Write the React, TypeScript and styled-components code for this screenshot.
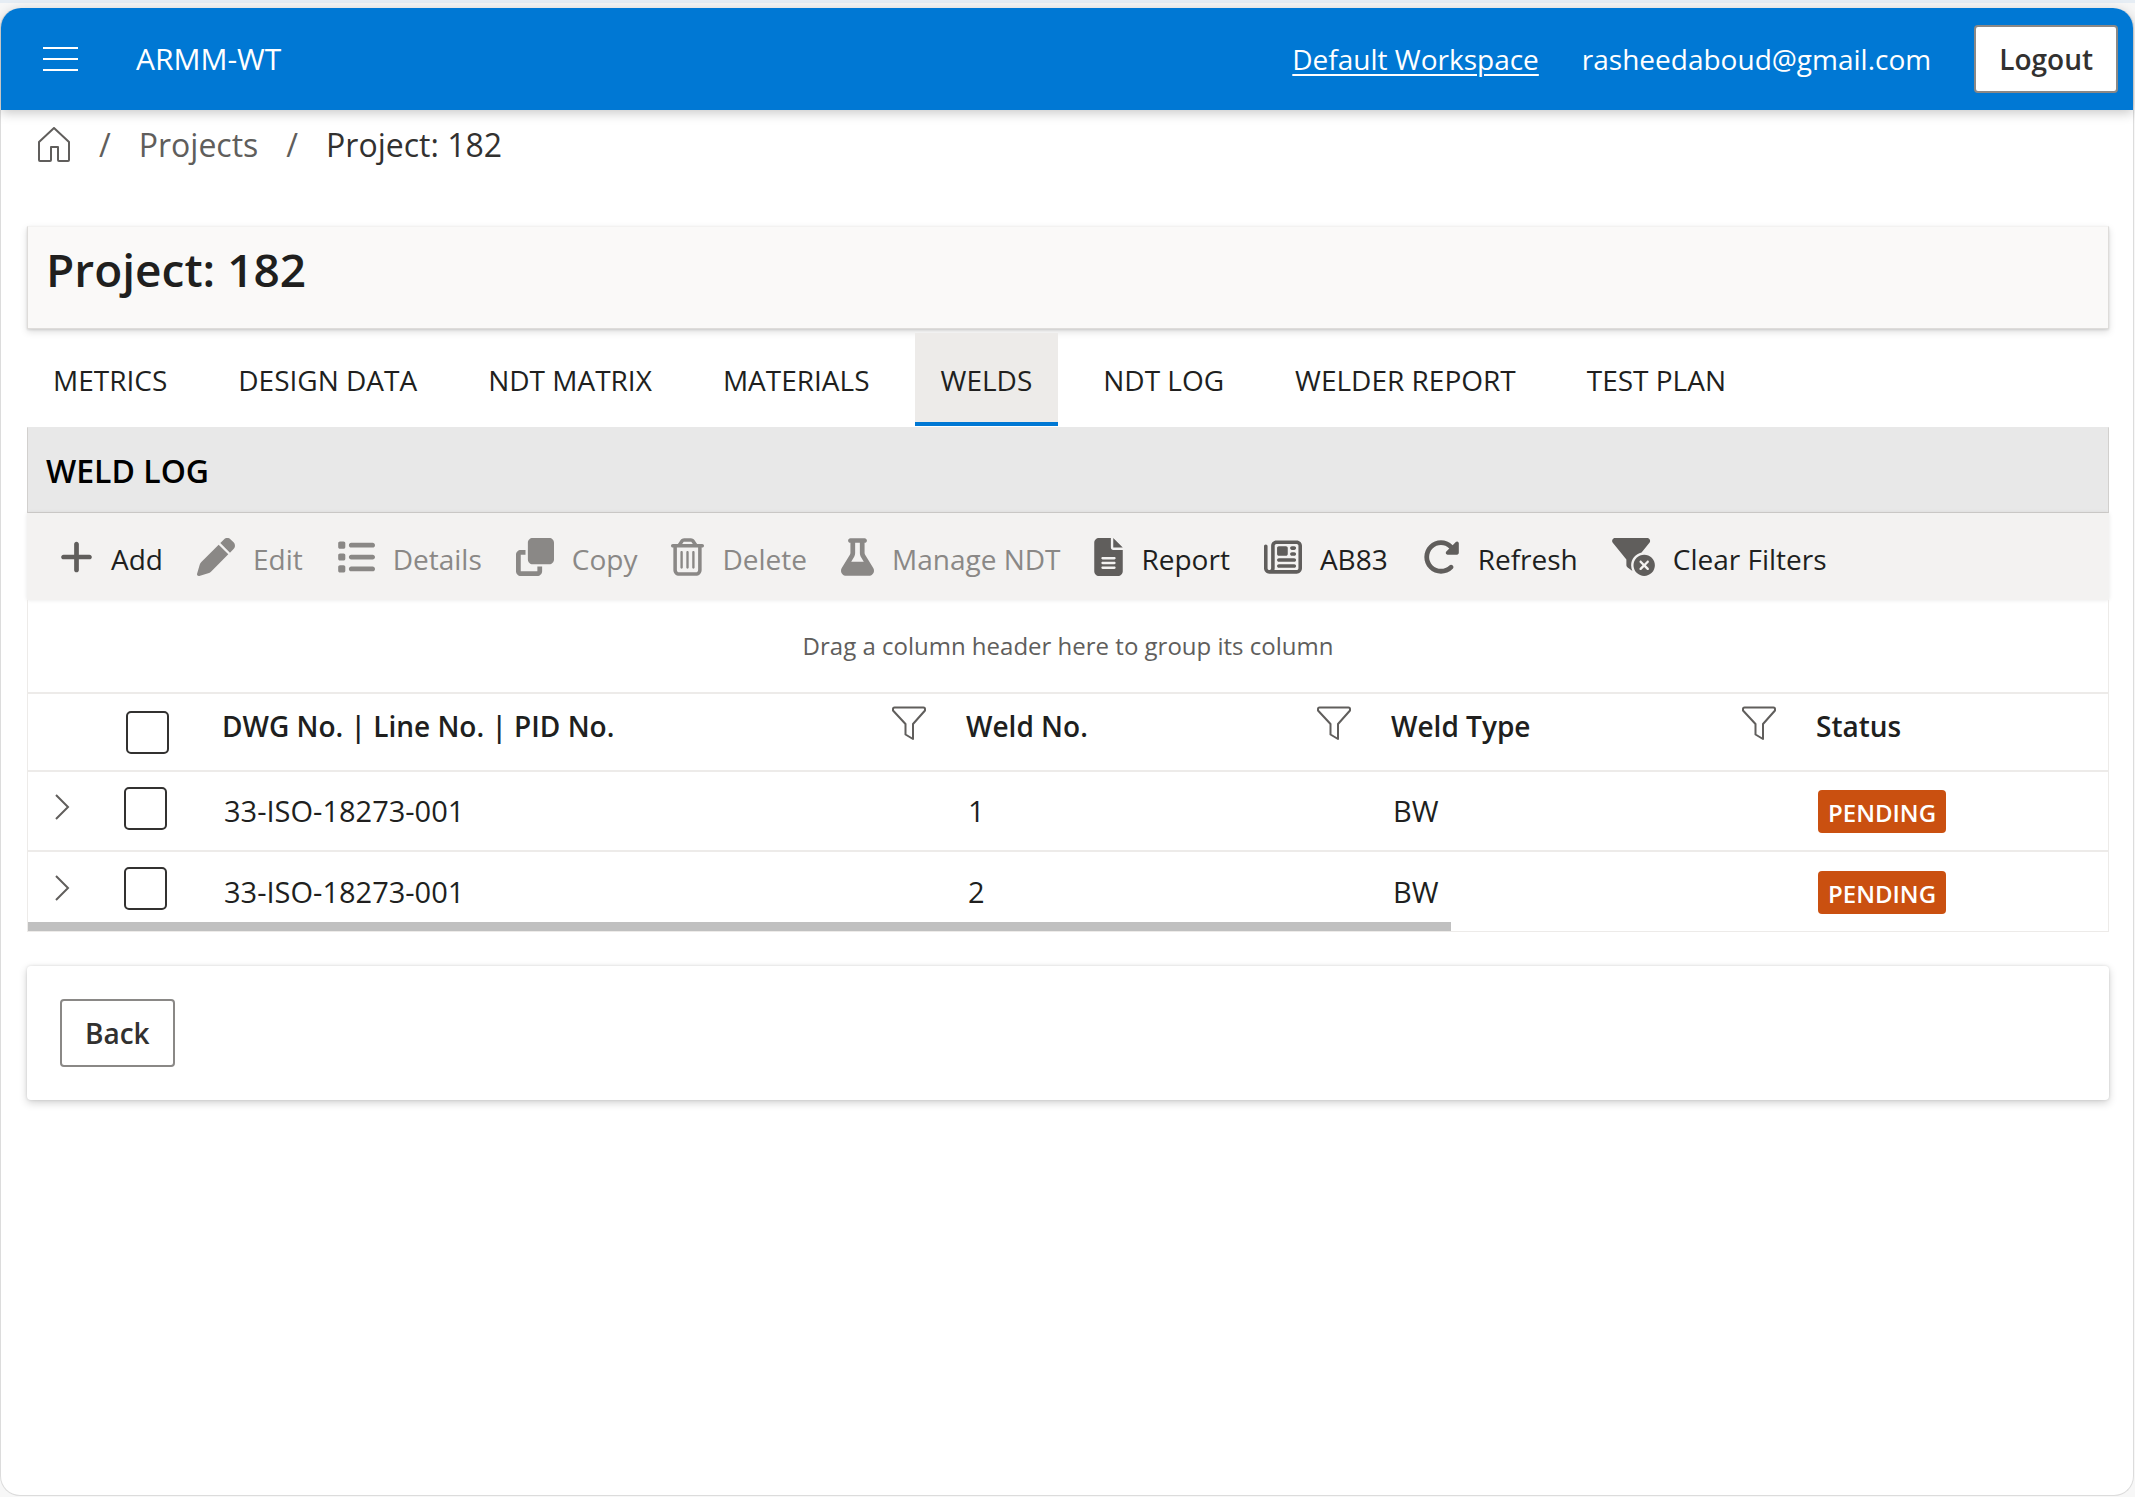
import React from "react";
import styled, { createGlobalStyle, css } from "styled-components";
import {
  FaClone,
  FaFileLines,
  FaFilterCircleXmark,
  FaFlask,
  FaList,
  FaPen,
  FaPlus,
  FaRegNewspaper,
  FaRegTrashCan,
  FaRotateRight,
} from "react-icons/fa6";

const color = {
  brand: "#0078d4",
  text: "#201f1e",
  textSoft: "#323130",
  muted: "#605e5c",
  disabled: "#8a8886",
  line: "#edebe9",
  panel: "#faf9f8",
  toolbar: "#f3f2f1",
  warning: "#ca5010",
};

const GlobalStyle = createGlobalStyle`
  * { box-sizing: border-box; }
  body {
    margin: 0;
    background: #f7f7f7;
    color: ${color.text};
    font-family: "Segoe UI", "Open Sans", "Noto Sans", sans-serif;
    font-size: 28px;
    line-height: 40px;
  }
  button, input { font: inherit; color: inherit; }
  h1, h2 { margin: 0; }
`;

const Window = styled.div`
  display: flex;
  flex-direction: column;
  min-height: 100vh;
  padding: 5px 1px 1px 0;
  border-top: 3px solid #e6edf4;
`;

const Page = styled.div`
  flex: 1;
  border: 1px solid #dcdcdc;
  border-top: 0;
  border-radius: 20px;
  background: #fff;
`;

const Header = styled.header`
  display: flex;
  align-items: center;
  height: 102px;
  padding: 0 15px 0 42px;
  border-radius: 20px 20px 0 0;
  background: ${color.brand};
  color: #fff;
  box-shadow: 0 3px 12px rgba(0, 0, 0, 0.22);
`;

const MenuButton = styled.button`
  display: flex;
  padding: 0;
  border: 0;
  background: none;
`;

const AppName = styled.span`
  margin-left: 58px;
  font-size: 30px;
`;

const UserArea = styled.div`
  display: flex;
  align-items: center;
  gap: 43px;
  margin-left: auto;
`;

const WorkspaceLink = styled.a`
  color: inherit;
  text-decoration-thickness: 2px;
  text-underline-offset: 4px;
`;

const OutlineButton = styled.button`
  height: 68px;
  padding: 0 23px;
  border: 2px solid ${color.disabled};
  border-radius: 4px;
  background: #fff;
  color: ${color.textSoft};
  font-weight: 600;
`;

const Breadcrumb = styled.nav`
  display: flex;
  align-items: center;
  gap: 28px;
  height: 70px;
  padding-left: 36px;
  color: ${color.muted};
  font-size: 32px;
`;

const CrumbLink = styled.a`
  display: flex;
  color: inherit;
  text-decoration: none;
`;

const CurrentCrumb = styled.span`
  color: ${color.textSoft};
`;

const Main = styled.main`
  padding: 46px 24px 24px 26px;
`;

const raised = css`
  box-shadow: 0 3px 7px rgba(0, 0, 0, 0.13), 0 1px 2px rgba(0, 0, 0, 0.11);
`;

const TitleBar = styled.div`
  height: 103px;
  padding: 10px 18px;
  border: 1px solid #dedcda;
  border-top-color: #f3f2f1;
  background: ${color.panel};
  ${raised}

  h1 {
    font-size: 46px;
    font-weight: 600;
    line-height: 64px;
  }
`;

const TabList = styled.div`
  display: flex;
  gap: 19px;
  padding-top: 4px;
`;

const Tab = styled.button<{ $active?: boolean }>`
  height: 93px;
  padding: 4px 26px 0;
  border: 0;
  border-bottom: 4px solid ${(p) => (p.$active ? color.brand : "transparent")};
  background: ${(p) => (p.$active ? color.line : "transparent")};
`;

const SectionBar = styled.div`
  height: 86px;
  margin-top: 1px;
  padding: 0 18px;
  border: 1px solid #d2d0ce;
  border-top-color: #e8e8e8;
  background: #e8e8e8;
  color: #000;

  h2 {
    font-size: 32px;
    font-weight: 600;
    line-height: 86px;
  }
`;

const Toolbar = styled.div`
  display: flex;
  align-items: center;
  gap: 34px;
  height: 87px;
  padding-left: 33px;
  background: ${color.toolbar};
  box-shadow: 0 0 4px rgba(0, 0, 0, 0.1);
`;

const ToolButton = styled.button<{ $iconWidth: number }>`
  display: flex;
  align-items: center;
  gap: 18px;
  padding: 0;
  border: 0;
  background: none;
  white-space: nowrap;

  svg {
    flex: none;
    width: ${(p) => p.$iconWidth}px;
    height: 38px;
    fill: ${color.muted};
  }
  span {
    padding-top: 4px;
  }
  &:disabled {
    color: ${color.disabled};
  }
  &:disabled svg {
    fill: ${color.disabled};
  }
`;

const Grid = styled.div`
  position: relative;
  border: 1px solid ${color.line};
  border-top: 0;
`;

const GroupPanel = styled.div`
  height: 92px;
  color: ${color.muted};
  font-size: 24px;
  line-height: 92px;
  text-align: center;
`;

const Table = styled.table`
  width: 100%;
  border-collapse: collapse;
  table-layout: fixed;
`;

const Col = styled.col<{ $width?: number }>`
  width: ${(p) => (p.$width ? `${p.$width}px` : "auto")};
`;

const Row = styled.tr<{ $head?: boolean }>`
  height: ${(p) => (p.$head ? 78 : 80)}px;
  border-top: 2px solid ${color.line};
`;

const HeadCell = styled.th`
  padding: 0 20px;
  font-weight: 600;
  text-align: left;
`;

const HeadContent = styled.div`
  display: flex;
  align-items: center;
  justify-content: space-between;
  padding-bottom: 12px;
`;

const FilterButton = styled.button`
  display: flex;
  margin-bottom: 6px;
  padding: 0;
  border: 0;
  background: none;
`;

const Cell = styled.td`
  padding: 0 22px;
  font-size: 29px;
`;

const ControlCell = styled.td`
  padding: 0 0 6px 26px;
`;

const HeadControlCell = styled.td`
  padding: 0 0 0 28px;
`;

const CheckBox = styled.input`
  display: block;
  width: 43px;
  height: 43px;
  margin: 0;
  border: 2px solid ${color.textSoft};
  border-radius: 5px;
  appearance: none;
  background: #fff;
`;

const ExpandButton = styled.button`
  display: flex;
  padding: 0 0 2px;
  border: 0;
  background: none;
`;

const Badge = styled.span`
  display: inline-block;
  padding: 2px 10px 0;
  border-radius: 4px;
  background: ${color.warning};
  color: #fff;
  font-size: 24px;
  font-weight: 600;
  line-height: 41px;
  vertical-align: middle;
`;

const ScrollThumb = styled.div`
  position: absolute;
  bottom: 0;
  left: 0;
  width: 68.4%;
  height: 9px;
  background: #c0c0c0;
`;

const Footer = styled.footer`
  margin-top: 34px;
  padding: 33px;
  border-radius: 4px;
  background: #fff;
  box-shadow: 0 3px 8px rgba(0, 0, 0, 0.18), 0 0 3px rgba(0, 0, 0, 0.12);

  button {
    display: block;
  }
`;

const MenuIcon = () => (
  <svg width="35" height="26" viewBox="0 0 35 26" stroke="#fff" strokeWidth="2">
    <path d="M0 2h35M0 13h35M0 24h35" />
  </svg>
);

const HomeIcon = () => (
  <svg width="34" height="36" viewBox="0 0 34 36" fill="none" stroke={color.muted} strokeWidth="2" strokeLinejoin="round">
    <path d="M2 15 17 1l15 14v18q0 1-1 1H22q-1 0-1-1V20h-7v13q0 1-1 1H3q-1 0-1-1z" />
  </svg>
);

const FilterIcon = () => (
  <svg width="34" height="34" viewBox="0 0 34 34" fill="none" stroke={color.muted} strokeWidth="2" strokeLinejoin="round">
    <path d="M2.500 1.500h29q1.500 0 1.500 1.500v1.500L21 18v11.500V33l-7.500-4.500V18L1 4.500V3q0-1.500 1.500-1.500z" />
  </svg>
);

const ChevronIcon = () => (
  <svg width="16" height="26" viewBox="0 0 16 26" fill="none" stroke={color.muted} strokeWidth="2">
    <path d="M2 1 14 13 2 25" />
  </svg>
);

const tabs = [
  "METRICS",
  "DESIGN DATA",
  "NDT MATRIX",
  "MATERIALS",
  "WELDS",
  "NDT LOG",
  "WELDER REPORT",
  "TEST PLAN",
];

const tools = [
  { label: "Add", Icon: FaPlus, width: 33, enabled: true },
  { label: "Edit", Icon: FaPen, width: 38, enabled: false },
  { label: "Details", Icon: FaList, width: 38, enabled: false },
  { label: "Copy", Icon: FaClone, width: 38, enabled: false },
  { label: "Delete", Icon: FaRegTrashCan, width: 33, enabled: false },
  { label: "Manage NDT", Icon: FaFlask, width: 33, enabled: false },
  { label: "Report", Icon: FaFileLines, width: 29, enabled: true },
  { label: "AB83", Icon: FaRegNewspaper, width: 38, enabled: true },
  { label: "Refresh", Icon: FaRotateRight, width: 38, enabled: true },
  { label: "Clear Filters", Icon: FaFilterCircleXmark, width: 43, enabled: true },
];

const columns = [
  { title: "DWG No. | Line No. | PID No.", filter: true },
  { title: "Weld No.", filter: true },
  { title: "Weld Type", filter: true },
  { title: "Status", filter: false },
];

const welds = [
  { drawing: "33-ISO-18273-001", number: "1", type: "BW", status: "PENDING" },
  { drawing: "33-ISO-18273-001", number: "2", type: "BW", status: "PENDING" },
];

export default function App() {
  return (
    <Window>
      <GlobalStyle />
      <Page>
        <Header>
          <MenuButton type="button" aria-label="Menu">
            <MenuIcon />
          </MenuButton>
          <AppName>ARMM-WT</AppName>
          <UserArea>
            <WorkspaceLink href="#workspace">Default Workspace</WorkspaceLink>
            <span>rasheedaboud@gmail.com</span>
            <OutlineButton type="button">Logout</OutlineButton>
          </UserArea>
        </Header>

        <Breadcrumb aria-label="Breadcrumb">
          <CrumbLink href="#home" aria-label="Home">
            <HomeIcon />
          </CrumbLink>
          <span>/</span>
          <CrumbLink href="#projects">Projects</CrumbLink>
          <span>/</span>
          <CurrentCrumb>Project: 182</CurrentCrumb>
        </Breadcrumb>

        <Main>
          <TitleBar>
            <h1>Project: 182</h1>
          </TitleBar>

          <TabList role="tablist">
            {tabs.map((tab) => (
              <Tab key={tab} type="button" role="tab" aria-selected={tab === "WELDS"} $active={tab === "WELDS"}>
                {tab}
              </Tab>
            ))}
          </TabList>

          <SectionBar>
            <h2>WELD LOG</h2>
          </SectionBar>

          <Toolbar role="toolbar">
            {tools.map(({ label, Icon, width, enabled }) => (
              <ToolButton key={label} type="button" disabled={!enabled} $iconWidth={width}>
                <Icon />
                <span>{label}</span>
              </ToolButton>
            ))}
          </Toolbar>

          <Grid>
            <GroupPanel>Drag a column header here to group its column</GroupPanel>
            <Table>
              <colgroup>
                <Col $width={70} />
                <Col $width={104} />
                <Col />
                <Col $width={425} />
                <Col $width={425} />
                <Col $width={312} />
              </colgroup>
              <thead>
                <Row $head>
                  <HeadControlCell />
                  <HeadControlCell>
                    <CheckBox type="checkbox" aria-label="Select all welds" />
                  </HeadControlCell>
                  {columns.map(({ title, filter }) => (
                    <HeadCell key={title} scope="col">
                      <HeadContent>
                        {title}
                        {filter && (
                          <FilterButton type="button" aria-label={`Filter ${title}`}>
                            <FilterIcon />
                          </FilterButton>
                        )}
                      </HeadContent>
                    </HeadCell>
                  ))}
                </Row>
              </thead>
              <tbody>
                {welds.map((weld) => (
                  <Row key={weld.number}>
                    <ControlCell>
                      <ExpandButton type="button" aria-label={`Expand weld ${weld.number}`}>
                        <ChevronIcon />
                      </ExpandButton>
                    </ControlCell>
                    <ControlCell>
                      <CheckBox type="checkbox" aria-label={`Select weld ${weld.number}`} />
                    </ControlCell>
                    <Cell>{weld.drawing}</Cell>
                    <Cell>{weld.number}</Cell>
                    <Cell>{weld.type}</Cell>
                    <Cell>
                      <Badge>{weld.status}</Badge>
                    </Cell>
                  </Row>
                ))}
              </tbody>
            </Table>
            <ScrollThumb />
          </Grid>

          <Footer>
            <OutlineButton type="button">Back</OutlineButton>
          </Footer>
        </Main>
      </Page>
    </Window>
  );
}
